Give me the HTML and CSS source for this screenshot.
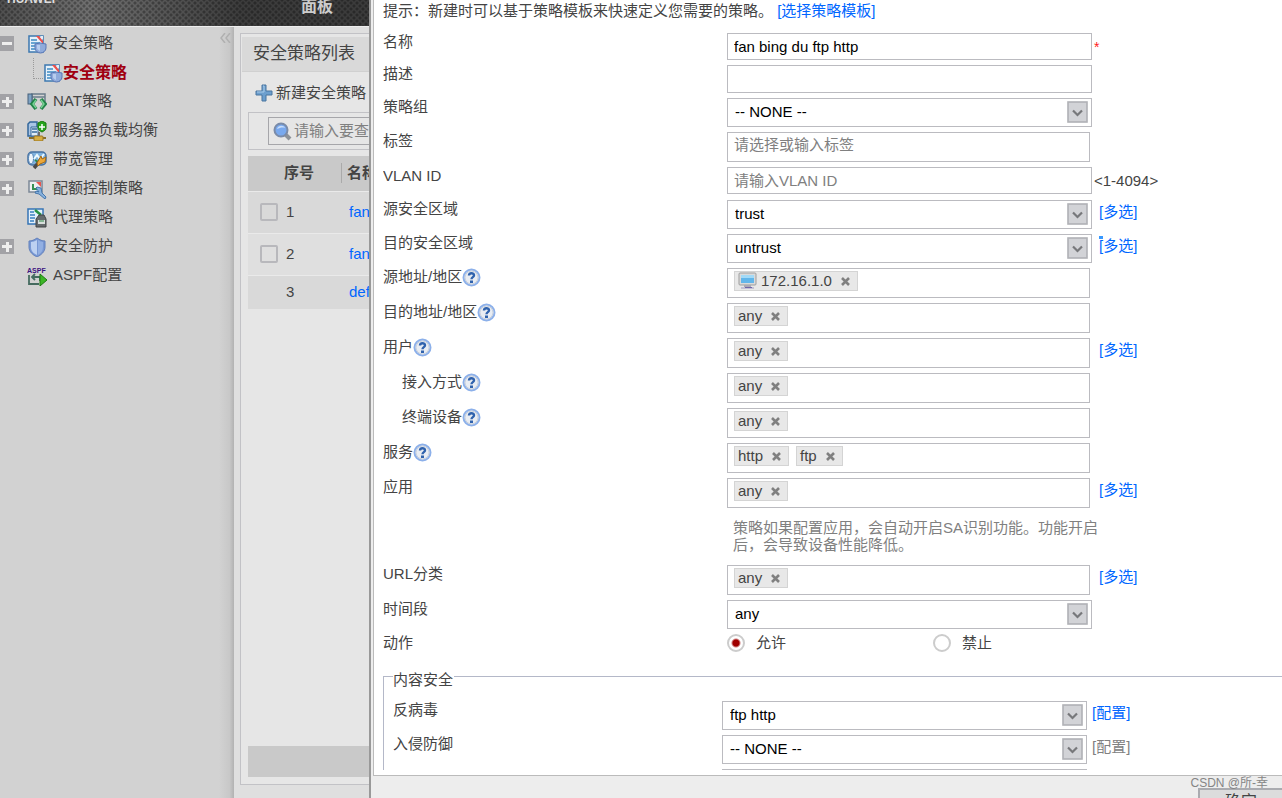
FILE: index.html
```html
<!DOCTYPE html>
<html lang="zh-CN">
<head>
  <meta charset="UTF-8">
  <title>安全策略</title>
  <link rel="stylesheet" href="styles.css">
</head>
<body>

<!-- Shared icons -->
<svg class="sprite" aria-hidden="true">
  <symbol id="i-policy" viewBox="0 0 20 20">
    <rect x="2" y="2" width="14" height="16" fill="#e8f2fa" stroke="#3c78b0" stroke-width="1.500"/>
    <path d="M4 6h6M4 9h9M4 12h4M4 15h4" stroke="#3f8cc4" stroke-width="1.400"/>
    <path d="M9 2h3l4 5v3z" fill="#ee4f4a"/><path d="M13 2h3v4z" fill="#e4eef8"/>
    <path d="M8 10l5-1 6 1v4c0 3-3 5-5.500 5S8 17 8 14z" fill="#8fabdb" stroke="#5876b4"/>
    <path d="M10 11h3v6c-2-1-3-2-3-3z" fill="#b8cdee"/>
  </symbol>
  <symbol id="i-nat" viewBox="0 0 20 20">
    <path d="M5 9V2h13v8M5 5h13" fill="none" stroke="#6b7d8c" stroke-width="1.500"/>
    <rect x="1" y="2" width="4" height="10" fill="#7fa3c4" stroke="#47617a"/>
    <path d="M9 7l-4 5 4 5M14 7l4 5-4 5" fill="none" stroke="#23834a" stroke-width="3.600"/>
    <path d="M9 8l-3 4 3 4M14 8l3 4-3 4" fill="none" stroke="#79d495" stroke-width="1.400"/>
  </symbol>
  <symbol id="i-server" viewBox="0 0 20 20">
    <path d="M1 3l2-2h7v14H1z" fill="#a9c5e4" stroke="#32669a" stroke-width="1.500"/>
    <path d="M4 6h7v9H4z" fill="#e0ecf7" stroke="#32669a"/><path d="M5 8h5M5 11h5" stroke="#376b9d" stroke-width="1.500"/>
    <path d="M11 2l4-2 4 2v5c0 2-2 3-4 4-2-1-4-2-4-4z" fill="#27a51d" stroke="#19780f"/>
    <path d="M15 3v6M12 6h6" stroke="#fff" stroke-width="1.500"/>
    <path d="M2 17h17" stroke="#88702d" stroke-width="2"/><rect x="7" y="15" width="9" height="5" rx="1" fill="#d6ae42" stroke="#9b7421"/><path d="M12 11v4" stroke="#6d6d6d" stroke-width="2"/>
  </symbol>
  <symbol id="i-band" viewBox="0 0 20 20">
    <rect x="1" y="2" width="18" height="13" rx="4" fill="#80b3df" stroke="#4671a2" stroke-width="1.500"/>
    <ellipse cx="4" cy="8.500" rx="2.500" ry="5.500" fill="#edf5fc" stroke="#5382b3"/>
    <path d="M7 9l3-4 3 4 4-5" fill="none" stroke="#eefaff" stroke-width="2"/><path d="M8 10l3 2 3-4" fill="none" stroke="#278a50" stroke-width="2"/>
    <path d="M7 18l6-7" stroke="#4a4a4a" stroke-width="3.500"/><path d="M10 13l4-7 1 3 4-2-1 5-5 2-2 2z" fill="#eda83a" stroke="#a26a18"/>
  </symbol>
  <symbol id="i-quota" viewBox="0 0 20 20">
    <rect x="2" y="2" width="13" height="11" fill="#edf0f2" stroke="#7c8897" stroke-width="1.500"/>
    <path d="M9 3h5v5z" fill="#e95650"/><path d="M6 5v5h5" fill="none" stroke="#359052" stroke-width="2"/>
    <path d="M10 8l4 1 1 5 4 4-1 2-6-5-4-1 1-2 3 1-3-4z" fill="#87b1dc" stroke="#4577ad"/>
  </symbol>
  <symbol id="i-proxy" viewBox="0 0 20 20">
    <rect x="1" y="1" width="15" height="15" fill="#e4f1fc" stroke="#3674b5" stroke-width="1.500"/>
    <path d="M3 4h4M3 7h5M3 10h5M3 13h4" stroke="#3980c0" stroke-width="1.500"/><path d="M8 2l6 5" stroke="#259143" stroke-width="2.500"/>
    <path d="M9 19v-8l3-4h5l2 4v8z" fill="#666b6d" stroke="#404547"/><path d="M11 12h7v4h-7z" fill="#d8dedc"/><path d="M12 13h5" stroke="#318a48"/>
  </symbol>
  <symbol id="i-shield" viewBox="0 0 20 20">
    <path d="M2 4c3 0 5-1 8-3 3 2 5 3 8 3v6c0 5-4 8-8 10-4-2-8-5-8-10z" fill="#7898d4" stroke="#6381bc"/>
    <path d="M4 5c2 0 4-1 6-2v15c-4-2-6-4-6-8z" fill="#bdd1f1"/><path d="M11 3c2 1 3 2 5 2v5c0 4-2 6-5 8z" fill="#92afe2"/>
  </symbol>
  <symbol id="i-help" viewBox="0 0 19 19">
    <circle cx="9.500" cy="9.500" r="8" fill="#e9edf3" stroke="#8cb0ea" stroke-width="2"/>
    <circle cx="9.500" cy="9.500" r="6.500" fill="none" stroke="#c7cfdb"/>
    <path d="M7 7.500C7 4.500 12 4.500 12 7.300c0 2-2.500 1.700-2.500 4" fill="none" stroke="#2f62ad" stroke-width="2.400"/>
    <rect x="8" y="12.500" width="3" height="2.500" fill="#2f62ad"/>
  </symbol>
  <symbol id="i-arrow" viewBox="0 0 21 22">
    <rect x="1" y="1" width="19" height="20" fill="#d2d3d7" stroke="#b0b1b6" stroke-width="1.600"/>
    <path d="M6 9.500l4.500 4.500L15 9.500" fill="none" stroke="#77787b" stroke-width="2.200"/>
  </symbol>
  <symbol id="i-close" viewBox="0 0 9 9">
    <path d="M1 1l7 7M8 1L1 8" stroke="#808080" stroke-width="2.600"/>
  </symbol>
  <symbol id="i-host" viewBox="0 0 19 18">
    <rect x="1" y="1" width="17" height="12" rx="1" fill="#dadada" stroke="#9d9d9d"/>
    <rect x="3" y="3" width="13" height="8" fill="#62b6ea"/><rect x="3" y="3" width="13" height="3" fill="#a3daf7"/>
    <path d="M6 13h7v2H6z" fill="#aaa9b5"/><path d="M3 15h13v2H3z" fill="#c3c1d4"/><path d="M7 15h7v1H7z" fill="#6f64a8"/>
  </symbol>
</svg>

<div class="app">
  <header class="topbar">
    <span class="brand">HUAWEI</span>
    <a href="#" class="top-tab">面板</a>
  </header>

  <div class="workspace">
    <!-- Left: navigation tree -->
    <nav class="sidebar">
      <ul class="tree">
        <li><button class="toggle minus" aria-label="收起"></button><svg class="icon"><use href="#i-policy"/></svg><a href="#">安全策略</a></li>
        <li class="child"><span class="branch"></span><svg class="icon"><use href="#i-policy"/></svg><a href="#" class="active">安全策略</a></li>
        <li><button class="toggle" aria-label="展开"></button><svg class="icon"><use href="#i-nat"/></svg><a href="#">NAT策略</a></li>
        <li><button class="toggle" aria-label="展开"></button><svg class="icon"><use href="#i-server"/></svg><a href="#">服务器负载均衡</a></li>
        <li><button class="toggle" aria-label="展开"></button><svg class="icon"><use href="#i-band"/></svg><a href="#">带宽管理</a></li>
        <li><button class="toggle" aria-label="展开"></button><svg class="icon"><use href="#i-quota"/></svg><a href="#">配额控制策略</a></li>
        <li><span class="no-toggle"></span><svg class="icon"><use href="#i-proxy"/></svg><a href="#">代理策略</a></li>
        <li><button class="toggle" aria-label="展开"></button><svg class="icon"><use href="#i-shield"/></svg><a href="#">安全防护</a></li>
        <li>
          <span class="no-toggle"></span>
          <svg class="icon" viewBox="0 0 20 20">
            <text class="icon-text" x="0" y="7">ASPF</text>
            <path d="M2 9v9h10M6 11h7v4M8 8l-3 3 3 3" fill="none" stroke="#456b5f" stroke-width="1.800"/>
            <path d="M13 8l7 6-7 6z" fill="#3cb626" stroke="#1c7a11"/>
          </svg>
          <a href="#">ASPF配置</a>
        </li>
      </ul>
      <div class="splitter">
        <button class="collapse" aria-label="隐藏导航">
          <svg width="11" height="10" viewBox="0 0 11 10"><path d="M5 0L1 5l4 5M10 0L6 5l4 5" fill="none" stroke="#b0b0b0" stroke-width="1.500"/></svg>
        </button>
      </div>
    </nav>

    <!-- Policy list behind the dialog -->
    <main class="panel">
      <h1>安全策略列表</h1>
      <div class="panel-body">
        <button class="add-btn">
          <svg width="18" height="18" viewBox="0 0 18 18"><path d="M7 1h4v6h6v4h-6v6H7v-6H1V7h6z" fill="#6d9fce" stroke="#48759f"/><path d="M8 2h1v6H2" fill="none" stroke="#a9cbe8"/></svg>
          新建安全策略
        </button>
        <div class="search">
          <label class="search-box">
            <svg width="19" height="19" viewBox="0 0 19 19"><path d="M12 12l5 5" stroke="#8d9298" stroke-width="4"/><circle cx="8" cy="8" r="6.500" fill="#79a9ee" stroke="#7a8ba8" stroke-width="2"/><path d="M4 7c1-4 7-4 8-1-3-1-5 0-8 1z" fill="#c8ddfa"/></svg>
            <input type="text" placeholder="请输入要查询的内容">
          </label>
        </div>
        <table class="policies">
          <thead>
            <tr><th class="col-no">序号</th><th>名称</th></tr>
          </thead>
          <tbody>
            <tr><td><label><input type="checkbox"><span>1</span></label></td><td><a href="#">fan</a></td></tr>
            <tr class="alt"><td><label><input type="checkbox"><span>2</span></label></td><td><a href="#">fan</a></td></tr>
            <tr class="fixed"><td><span class="num">3</span></td><td><a href="#">default</a></td></tr>
          </tbody>
        </table>
        <div class="pager"></div>
      </div>
    </main>
  </div>

  <!-- New policy dialog -->
  <section class="dialog">
    <div class="dialog-body">
      <form class="policy-form">
        <p class="hint">提示：新建时可以基于策略模板来快速定义您需要的策略。 <a href="#">[选择策略模板]</a></p>

        <div class="row">
          <label for="name">名称</label>
          <input class="text" type="text" id="name" value="fan bing du ftp http">
          <span class="required">*</span>
        </div>
        <div class="row">
          <label for="desc">描述</label>
          <input class="text desc" type="text" id="desc">
        </div>
        <div class="row">
          <label for="group">策略组</label>
          <span class="select"><select id="group"><option>-- NONE --</option></select><svg><use href="#i-arrow"/></svg></span>
        </div>
        <div class="row">
          <label for="label">标签</label>
          <input class="text tag-input" type="text" id="label" placeholder="请选择或输入标签">
        </div>
        <div class="row">
          <label for="vlan">VLAN ID</label>
          <input class="text" type="text" id="vlan" placeholder="请输入VLAN ID">
          <span class="range">&lt;1-4094&gt;</span>
        </div>
        <div class="row">
          <label for="srcZone">源安全区域</label>
          <span class="select"><select id="srcZone"><option>trust</option></select><svg><use href="#i-arrow"/></svg></span>
          <a href="#" class="multi">[多选]</a>
        </div>
        <div class="row">
          <label for="dstZone">目的安全区域</label>
          <span class="select"><select id="dstZone"><option>untrust</option></select><svg><use href="#i-arrow"/></svg></span>
          <a href="#" class="multi marked">[多选]</a>
        </div>
        <div class="row">
          <span class="label">源地址/地区<svg class="help"><use href="#i-help"/></svg></span>
          <div class="tags"><span class="tag"><svg class="host"><use href="#i-host"/></svg>172.16.1.0<button type="button" aria-label="删除"><svg><use href="#i-close"/></svg></button></span></div>
        </div>
        <div class="row">
          <span class="label">目的地址/地区<svg class="help"><use href="#i-help"/></svg></span>
          <div class="tags"><span class="tag">any<button type="button" aria-label="删除"><svg><use href="#i-close"/></svg></button></span></div>
        </div>
        <div class="row">
          <span class="label">用户<svg class="help"><use href="#i-help"/></svg></span>
          <div class="tags"><span class="tag">any<button type="button" aria-label="删除"><svg><use href="#i-close"/></svg></button></span></div>
          <a href="#" class="multi">[多选]</a>
        </div>
        <div class="row">
          <span class="label indent">接入方式<svg class="help"><use href="#i-help"/></svg></span>
          <div class="tags"><span class="tag">any<button type="button" aria-label="删除"><svg><use href="#i-close"/></svg></button></span></div>
        </div>
        <div class="row">
          <span class="label indent">终端设备<svg class="help"><use href="#i-help"/></svg></span>
          <div class="tags"><span class="tag">any<button type="button" aria-label="删除"><svg><use href="#i-close"/></svg></button></span></div>
        </div>
        <div class="row">
          <span class="label">服务<svg class="help"><use href="#i-help"/></svg></span>
          <div class="tags">
            <span class="tag">http<button type="button" aria-label="删除"><svg><use href="#i-close"/></svg></button></span>
            <span class="tag">ftp<button type="button" aria-label="删除"><svg><use href="#i-close"/></svg></button></span>
          </div>
        </div>
        <div class="row">
          <span class="label">应用</span>
          <div class="tags"><span class="tag">any<button type="button" aria-label="删除"><svg><use href="#i-close"/></svg></button></span></div>
          <a href="#" class="multi">[多选]</a>
        </div>
        <div class="row">
          <span class="label"></span>
          <p class="note">策略如果配置应用，会自动开启SA识别功能。功能开启后，会导致设备性能降低。</p>
        </div>
        <div class="row">
          <span class="label">URL分类</span>
          <div class="tags"><span class="tag">any<button type="button" aria-label="删除"><svg><use href="#i-close"/></svg></button></span></div>
          <a href="#" class="multi">[多选]</a>
        </div>
        <div class="row">
          <label for="time">时间段</label>
          <span class="select"><select id="time"><option>any</option></select><svg><use href="#i-arrow"/></svg></span>
        </div>
        <div class="row">
          <span class="label">动作</span>
          <label class="radio"><input type="radio" name="action" checked>允许</label>
          <label class="radio"><input type="radio" name="action">禁止</label>
        </div>

        <fieldset>
          <legend>内容安全</legend>
          <div class="row">
            <label for="av">反病毒</label>
            <span class="select"><select id="av"><option>ftp http</option></select><svg><use href="#i-arrow"/></svg></span>
            <a href="#" class="config">[配置]</a>
          </div>
          <div class="row">
            <label for="ips">入侵防御</label>
            <span class="select"><select id="ips"><option>-- NONE --</option></select><svg><use href="#i-arrow"/></svg></span>
            <a href="#" class="config disabled">[配置]</a>
          </div>
          <div class="row">
            <span class="label"></span>
            <span class="select"><select aria-label="URL过滤"></select></span>
          </div>
        </fieldset>
      </form>
    </div>
    <div class="dialog-footer">
      <button class="ok-btn">确定</button>
    </div>
  </section>

  <span class="watermark">CSDN @所-幸</span>
</div>

</body>
</html>
```
FILE: styles.css
```css
* {
  box-sizing: border-box;
}

body {
  margin: 0;
  font-family: "Liberation Sans", "Noto Sans CJK SC", sans-serif;
  font-size: 15px;
  line-height: 18px;
  color: #444;
}

a {
  color: #0066ff;
  text-decoration: none;
}

button, input, select {
  font: inherit;
  color: inherit;
}

button {
  padding: 0;
  border: none;
  background: none;
  cursor: pointer;
}

.sprite {
  display: none;
}

.app {
  position: relative;
  display: flex;
  flex-direction: column;
  height: 100vh;
  overflow: hidden;
}

/* Top bar */
.topbar {
  display: flex;
  flex: none;
  height: 27px;
  overflow: hidden;
  border-bottom: 1px solid #eee;
  background:
    radial-gradient(circle, rgba(0, 0, 0, 0.3) 1px, transparent 2px) 0 0 / 6px 6px,
    radial-gradient(circle, rgba(0, 0, 0, 0.3) 1px, transparent 2px) 3px 3px / 6px 6px,
    linear-gradient(to right, #505050, #707070 90px, #3c3c3c 240px, #333);
}

.brand {
  width: 294px;
  margin-top: -10px;
  padding-left: 7px;
  font-size: 12px;
  font-weight: bold;
  color: #ddd;
}

.top-tab {
  margin-top: -2px;
  padding-left: 7px;
  font-size: 16px;
  font-weight: bold;
  color: #ccc;
}

.workspace {
  display: flex;
  flex: 1;
  min-height: 0;
  background: #dfdfdf;
}

/* Navigation tree */
.sidebar {
  display: flex;
  flex: none;
  width: 234px;
  background: #d2d2d2;
}

.tree {
  flex: 1;
  margin: 0;
  padding: 2px 0 0;
  list-style: none;
}

.tree li {
  display: flex;
  align-items: center;
  height: 29px;
}

.tree a {
  padding-left: 6px;
  padding-bottom: 2px;
  color: #444;
}

.tree .active {
  padding-left: 0;
  padding-bottom: 0;
  font-size: 16px;
  font-weight: bold;
  color: #a00010;
}

.toggle, .no-toggle {
  width: 14px;
  height: 15px;
  margin-right: 13px;
}

.toggle {
  background:
    linear-gradient(#eee, #eee) center / 10px 3px no-repeat,
    linear-gradient(#eee, #eee) center / 3px 10px no-repeat,
    #a2a2a6;
}

.toggle.minus {
  background: linear-gradient(#eee, #eee) center / 10px 3px no-repeat, #a2a2a6;
}

.icon {
  width: 20px;
  height: 20px;
}

.icon-text {
  font-size: 7px;
  font-weight: bold;
  fill: #3c1380;
}

.branch {
  align-self: flex-start;
  width: 10px;
  height: 21px;
  margin-left: 33px;
  border-left: 1px dotted #999;
  border-bottom: 1px dotted #999;
}

.splitter {
  width: 15px;
  background: linear-gradient(to right, #d2d2d2, #c8c8c8 70%, #b2b2b2);
}

.collapse {
  display: flex;
  align-items: center;
  justify-content: center;
  width: 13px;
  height: 21px;
}

/* Policy list */
.panel {
  display: flex;
  flex: 1;
  flex-direction: column;
  margin: 6px 6px 13px;
  padding: 3px 1px 0;
  border: 1px solid #c2c2c6;
  background: #e6e6e6;
}

.panel h1 {
  margin: 0;
  padding: 0 11px;
  border-bottom: 1px solid #d0d0d0;
  background: #d9d9d9;
  font-size: 17px;
  font-weight: normal;
  line-height: 34px;
}

.panel-body {
  display: flex;
  flex: 1;
  flex-direction: column;
  padding: 10px 6px 7px;
}

.add-btn {
  display: flex;
  align-items: center;
  align-self: flex-start;
  gap: 3px;
  height: 22px;
  margin-bottom: 8px;
  padding-left: 7px;
}

.search {
  padding: 4px 19px;
  border: 1px solid #c2c2c6;
}

.search-box {
  display: flex;
  align-items: center;
  gap: 2px;
  height: 28px;
  padding-left: 4px;
  border: 1px solid #a6a6aa;
}

.search-box input {
  flex: 1;
  padding: 0;
  border: none;
  background: none;
}

::placeholder {
  color: #808080;
}

.policies {
  width: 100%;
  margin-top: 6px;
  border-collapse: collapse;
}

.policies th {
  height: 35px;
  padding: 0 0 0 6px;
  background: linear-gradient(#aaa, #aaa) left / 1px 20px no-repeat, #c9c9c9;
  text-align: left;
}

.policies .col-no {
  width: 93px;
  padding-left: 36px;
  background: #c9c9c9;
}

.policies td {
  height: 42px;
  padding: 0 0 0 8px;
  border-top: 1px solid #eaeaea;
  background: #d9d9d9;
}

.policies .alt td {
  background: #dfdfdf;
}

.policies .fixed td {
  height: 34px;
}

.policies label {
  display: flex;
  align-items: center;
  gap: 8px;
  padding-left: 4px;
}

.policies input {
  appearance: none;
  width: 18px;
  height: 18px;
  margin: 0;
  border: 2px solid #b8b8bc;
  border-radius: 2px;
}

.num {
  padding-left: 30px;
}

.pager {
  height: 31px;
  margin-top: auto;
  background: #c9c9c9;
}

/* Dialog */
.dialog {
  position: absolute;
  inset: 0 0 0 369px;
  display: flex;
  flex-direction: column;
  border-left: 2px solid #999;
  background: #ededed;
}

.dialog-body {
  display: flex;
  flex: 1;
  flex-direction: column;
  min-height: 0;
  margin-left: 2px;
  padding: 2px 0 5px 9px;
  border-left: 1px solid #bbb;
  border-bottom: 1px solid #bbb;
  background: #fff;
}

.policy-form {
  flex: 1;
  min-height: 0;
  overflow: hidden;
}

.hint {
  margin: 0 0 13px;
}

.row {
  display: flex;
  align-items: flex-start;
  margin-bottom: 5px;
}

.row > label:first-child, .row > .label {
  display: flex;
  flex: none;
  width: 344px;
}

.row > .indent {
  padding-left: 19px;
}

.help {
  width: 19px;
  height: 19px;
}

.text {
  width: 365px;
  height: 27px;
  padding: 0 6px;
  border: 1px solid #bbbbc0;
  color: #000;
}

.desc {
  height: 28px;
}

.tag-input {
  width: 363px;
  height: 30px;
  padding-bottom: 6px;
}

.required {
  padding: 5px 0 0 2px;
  font-size: 14px;
  color: #ff2020;
}

.range {
  padding-left: 2px;
  line-height: 28px;
}

.select {
  position: relative;
  width: 365px;
  height: 29px;
}

.select select {
  appearance: none;
  display: block;
  width: 100%;
  height: 29px;
  padding: 0 30px 2px 7px;
  border: 1px solid #bbbbc0;
  border-radius: 0;
  background: #fff;
  color: #000;
}

.select svg {
  position: absolute;
  top: 3px;
  right: 4px;
  width: 21px;
  height: 22px;
  pointer-events: none;
}

.multi {
  padding-left: 7px;
  line-height: 24px;
}

.tags + .multi {
  padding-left: 9px;
}

.marked {
  background: linear-gradient(#3898ff, #3898ff) 7px 2px / 4px 3px no-repeat;
}

.config {
  padding-left: 5px;
  line-height: 24px;
}

.disabled {
  color: #808080;
}

.tags {
  display: flex;
  gap: 7px;
  width: 363px;
  height: 30px;
  padding: 2px 6px;
  border: 1px solid #bbbbc0;
}

.tag {
  display: flex;
  align-items: center;
  height: 20px;
  padding: 0 7px 0 3px;
  border: 1px solid #d4d4d4;
  background: #e8e8e8;
}

.tag button {
  display: flex;
  margin-left: 9px;
}

.tag button svg {
  width: 9px;
  height: 9px;
}

.host {
  width: 19px;
  height: 18px;
  margin-right: 4px;
}

.note {
  width: 374px;
  margin: 0;
  padding: 6px 0 7px 6px;
  line-height: 17px;
  color: #808080;
}

.radio {
  display: flex;
  align-items: center;
  gap: 11px;
  width: 206px;
}

.radio input {
  appearance: none;
  width: 18px;
  height: 18px;
  margin: 0;
  border: 2px solid #ccc;
  border-radius: 50%;
}

.radio input:checked {
  background: radial-gradient(circle, #a00000 3px, #fff 5px);
}

fieldset {
  margin: 11px 0 0;
  padding: 12px 0 10px 9px;
  border: 1px solid #b4b8c8;
  border-right: none;
}

legend {
  padding: 8px 1px 0 0;
}

fieldset .row > label:first-child, fieldset .row > .label {
  width: 329px;
}

.dialog-footer {
  display: flex;
  flex: none;
  justify-content: flex-end;
  height: 22px;
  padding-top: 12px;
  overflow: hidden;
}

.ok-btn {
  width: 84px;
  height: 28px;
  border: 2px solid #aaabb0;
  border-right: none;
  background: #dcdcdc;
  font-size: 16px;
}

.watermark {
  position: absolute;
  right: 14px;
  bottom: 6px;
  font-size: 12px;
  color: #858585;
}
```
